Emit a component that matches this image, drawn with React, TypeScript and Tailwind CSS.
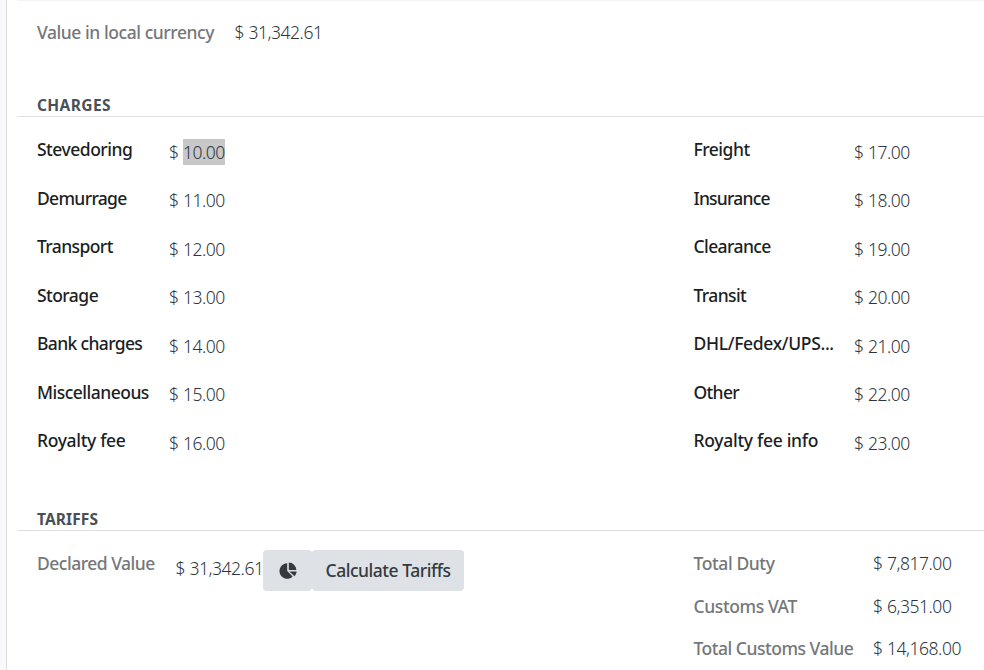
type Field = { label: string; value: string; tracking: string; selected?: boolean };

const leftCharges: Field[] = [
  { label: "Stevedoring", value: "10.00", tracking: "tracking-[-0.5px]", selected: true },
  { label: "Demurrage", value: "11.00", tracking: "tracking-[-0.68px]" },
  { label: "Transport", value: "12.00", tracking: "tracking-[-0.6px]" },
  { label: "Storage", value: "13.00", tracking: "tracking-[-0.55px]" },
  { label: "Bank charges", value: "14.00", tracking: "tracking-[-0.65px]" },
  { label: "Miscellaneous", value: "15.00", tracking: "tracking-[-0.52px]" },
  { label: "Royalty fee", value: "16.00", tracking: "tracking-[-0.34px]" },
];

const rightCharges: Field[] = [
  { label: "Freight", value: "17.00", tracking: "tracking-[-0.49px]" },
  { label: "Insurance", value: "18.00", tracking: "tracking-[-0.78px]" },
  { label: "Clearance", value: "19.00", tracking: "tracking-[-0.59px]" },
  { label: "Transit", value: "20.00", tracking: "tracking-[-0.6px]" },
  { label: "DHL/Fedex/UPS...", value: "21.00", tracking: "tracking-[-0.33px]" },
  { label: "Other", value: "22.00", tracking: "tracking-[-0.65px]" },
  { label: "Royalty fee info", value: "23.00", tracking: "tracking-[-0.3px]" },
];

const totals: Field[] = [
  { label: "Total Duty", value: "7,817.00", tracking: "tracking-[-0.4px]" },
  { label: "Customs VAT", value: "6,351.00", tracking: "tracking-[-0.4px]" },
  { label: "Total Customs Value", value: "14,168.00", tracking: "tracking-[-0.49px]" },
];

function Money({ value, selected }: { value: string; selected?: boolean }) {
  return (
    <span className="flex shrink-0 font-light leading-[26px] tracking-[-0.47px] text-[#2d3540]">
      <span className="w-[14px] shrink-0">$</span>
      <span className={selected ? "bg-[#c8c8c8]" : ""}>{value}</span>
    </span>
  );
}

function ChargeColumn({ fields, labelWidth }: { fields: Field[]; labelWidth: string }) {
  return (
    <div className="flex flex-col">
      {fields.map((f) => (
        <div key={f.label} className="flex h-[48.5px]">
          <span className={`${labelWidth} ${f.tracking} shrink-0 font-medium leading-[26px] text-[#1b1f24]`}>
            {f.label}
          </span>
          <span className="pt-[2.5px]">
            <Money value={f.value} selected={f.selected} />
          </span>
        </div>
      ))}
    </div>
  );
}

function SectionTitle({ children, tracking }: { children: string; tracking: string }) {
  return (
    <h2 className={`${tracking} h-[23px] border-b border-[#dee0e3] pl-5 text-[15.5px] font-bold leading-[23px] text-[#495057]`}>
      {children}
    </h2>
  );
}

export default function App() {
  return (
    <div className="flex h-[670px] w-[984px] overflow-hidden whitespace-nowrap bg-white font-['Noto_Sans',sans-serif] text-[17.5px]">
      <div className="w-[7px] shrink-0 border-r border-[#d8dde3] bg-[#f8f9fa]" />
      <main className="ml-[10px] flex w-[967px] shrink-0 flex-col border-t border-[#f3f4f6]">
        <div className="flex h-[93px] shrink-0 pl-5 pt-[18px]">
          <span className="w-[197.5px] shrink-0 font-medium leading-[26px] tracking-[-0.44px] text-[#757779]">
            Value in local currency
          </span>
          <Money value="31,342.61" />
        </div>
        <SectionTitle tracking="tracking-[0.4px]">CHARGES</SectionTitle>
        <div className="flex h-[391px] shrink-0 pl-5 pt-[19px]">
          <div className="w-[656.5px] shrink-0">
            <ChargeColumn fields={leftCharges} labelWidth="w-[132px]" />
          </div>
          <ChargeColumn fields={rightCharges} labelWidth="w-[160.5px]" />
        </div>
        <SectionTitle tracking="tracking-[0.1px]">TARIFFS</SectionTitle>
        <div className="flex shrink-0 pl-5 pt-[19px]">
          <div className="flex w-[656.5px] shrink-0 items-start">
            <span className="w-[138.5px] shrink-0 font-medium leading-[26px] tracking-[-0.5px] text-[#757779]">
              Declared Value
            </span>
            <span className="w-[87.5px] shrink-0 pt-[5px]">
              <Money value="31,342.61" />
            </span>
            <button className="flex h-[41px] w-[49px] items-center justify-center rounded bg-[#dee2e6]">
              <svg width="18" height="18" viewBox="0 0 18 18" fill="#343a40">
                <path d="M8.2 1.2v7.9l5.5 5.5A7.8 7.8 0 1 1 8.2 1.2Z" />
                <path d="M9.8 0.6a7.8 7.8 0 0 1 7.6 7.5H9.8Z" />
                <path d="M10.3 9.6h7.4a7.5 7.5 0 0 1-2.2 4.6Z" />
              </svg>
            </button>
            <button className="h-[41px] w-[152px] rounded bg-[#dee2e6] font-medium tracking-[-0.47px] text-[#343a40]">
              Calculate Tariffs
            </button>
          </div>
          <div className="flex flex-col">
            {totals.map((t) => (
              <div key={t.label} className="flex h-[42.5px]">
                <span className={`${t.tracking} w-[179.5px] shrink-0 font-medium leading-[26px] text-[#757779]`}>{t.label}</span>
                <Money value={t.value} />
              </div>
            ))}
          </div>
        </div>
      </main>
    </div>
  );
}
